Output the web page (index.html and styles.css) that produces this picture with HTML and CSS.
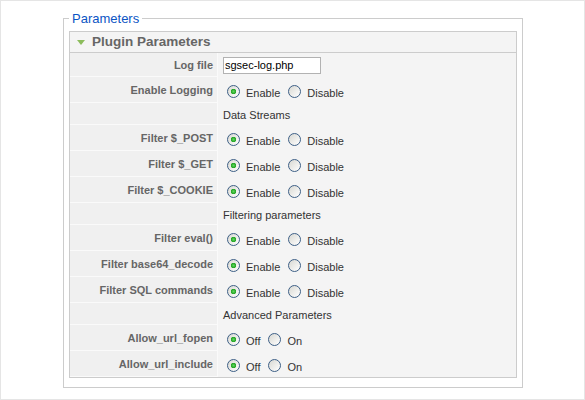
FILE: index.html
```html
<!DOCTYPE html>
<html lang="en">
<head>
    <meta charset="UTF-8">
    <title>Plugin Parameters</title>
    <link rel="stylesheet" href="styles.css">
</head>
<body>
    <fieldset class="params">
        <legend>Parameters</legend>

        <div class="panel">
            <h3 class="panel-title"><span class="arrow"></span>Plugin Parameters</h3>

            <div class="paramlist">
                <div class="row row-input">
                    <div class="key">Log file</div>
                    <div class="value"><input type="text" class="text" value="sgsec-log.php"></div>
                </div>
                <div class="row">
                    <div class="key">Enable Logging</div>
                    <div class="value">
                        <label><input type="radio" name="logging" checked><span>Enable</span></label>
                        <label><input type="radio" name="logging"><span>Disable</span></label>
                    </div>
                </div>

                <!-- Data Streams -->
                <div class="row row-head">
                    <div class="key"></div>
                    <div class="value">Data Streams</div>
                </div>
                <div class="row">
                    <div class="key">Filter $_POST</div>
                    <div class="value">
                        <label><input type="radio" name="post" checked><span>Enable</span></label>
                        <label><input type="radio" name="post"><span>Disable</span></label>
                    </div>
                </div>
                <div class="row">
                    <div class="key">Filter $_GET</div>
                    <div class="value">
                        <label><input type="radio" name="get" checked><span>Enable</span></label>
                        <label><input type="radio" name="get"><span>Disable</span></label>
                    </div>
                </div>
                <div class="row">
                    <div class="key">Filter $_COOKIE</div>
                    <div class="value">
                        <label><input type="radio" name="cookie" checked><span>Enable</span></label>
                        <label><input type="radio" name="cookie"><span>Disable</span></label>
                    </div>
                </div>

                <!-- Filtering parameters -->
                <div class="row row-head">
                    <div class="key"></div>
                    <div class="value">Filtering parameters</div>
                </div>
                <div class="row">
                    <div class="key">Filter eval()</div>
                    <div class="value">
                        <label><input type="radio" name="eval" checked><span>Enable</span></label>
                        <label><input type="radio" name="eval"><span>Disable</span></label>
                    </div>
                </div>
                <div class="row">
                    <div class="key">Filter base64_decode</div>
                    <div class="value">
                        <label><input type="radio" name="base64" checked><span>Enable</span></label>
                        <label><input type="radio" name="base64"><span>Disable</span></label>
                    </div>
                </div>
                <div class="row">
                    <div class="key">Filter SQL commands</div>
                    <div class="value">
                        <label><input type="radio" name="sql" checked><span>Enable</span></label>
                        <label><input type="radio" name="sql"><span>Disable</span></label>
                    </div>
                </div>

                <!-- Advanced Parameters -->
                <div class="row row-head">
                    <div class="key"></div>
                    <div class="value">Advanced Parameters</div>
                </div>
                <div class="row">
                    <div class="key">Allow_url_fopen</div>
                    <div class="value">
                        <label><input type="radio" name="fopen" checked><span>Off</span></label>
                        <label><input type="radio" name="fopen"><span>On</span></label>
                    </div>
                </div>
                <div class="row">
                    <div class="key">Allow_url_include</div>
                    <div class="value">
                        <label><input type="radio" name="include" checked><span>Off</span></label>
                        <label><input type="radio" name="include"><span>On</span></label>
                    </div>
                </div>
            </div>
        </div>
    </fieldset>
</body>
</html>
```

FILE: styles.css
```css
body {
    margin: 0;
    height: 400px;
    box-sizing: border-box;
    border: 1px solid #e5e5e5;
    padding: 10px 0 0 62px;
    background-color: #fff;
    font-family: "Liberation Sans", Arial, sans-serif;
    font-size: 11px;
    color: #333;
}
.params {
    width: 460px;
    box-sizing: border-box;
    margin: 0;
    padding: 5px 5px 9px;
    border: 1px solid #ccc;
}
.params legend {
    padding: 0 3px;
    font-size: 13px;
    line-height: 15px;
    color: #0b55c4;
}
.panel {
    border: 1px solid #ccc;
    background-color: #f4f4f4;
}
.panel-title {
    display: flex;
    align-items: center;
    margin: 0;
    height: 20px;
    padding-left: 7px;
    border-bottom: 1px solid #ccc;
    font-size: 13.5px;
    line-height: 20px;
    color: #666;
}
.arrow {
    width: 0;
    height: 0;
    margin-right: 7px;
    border-left: 4px solid transparent;
    border-right: 4px solid transparent;
    border-top: 5px solid #8cbc5c;
}
.row {
    display: flex;
    height: 26px;
}
.row-head {
    height: 22px;
}
.row-input {
    height: 24px;
}
.key {
    display: flex;
    align-items: center;
    justify-content: flex-end;
    width: 148px;
    box-sizing: border-box;
    padding-right: 4px;
    background-color: #f0f0f0;
    border-right: 1px solid #fafafa;
    border-bottom: 1px solid #fafafa;
    font-weight: bold;
    color: #666;
}
.value {
    display: flex;
    align-items: center;
    flex: 1;
    padding: 3px 0 0 5px;
}
.row-head .value {
    padding-top: 2px;
}
.row-input .value {
    padding-top: 0;
}
.value label {
    display: flex;
    align-items: center;
}
.value label span {
    padding-top: 3px;
    margin-right: 4px;
}
.value input[type=radio] {
    appearance: none;
    -webkit-appearance: none;
    width: 13px;
    height: 13px;
    margin: 0 6px 0 4px;
    box-sizing: border-box;
    border: 1px solid #3d5f86;
    border-radius: 50%;
    background: linear-gradient(135deg, #d8d8d2, #fff);
}
.value input[type=radio]:checked {
    background: radial-gradient(circle, #5fd85f 0, #21a121 2.5px, transparent 3px),
        linear-gradient(135deg, #d8d8d2, #fff);
}
.value input.text {
    width: 98px;
    height: 17px;
    box-sizing: border-box;
    margin: 0;
    padding: 0 1px;
    border: 1px solid #b2b2b2;
    background-color: #fff;
    font-family: "Liberation Sans", Arial, sans-serif;
    font-size: 11px;
    color: #000;
}
```
